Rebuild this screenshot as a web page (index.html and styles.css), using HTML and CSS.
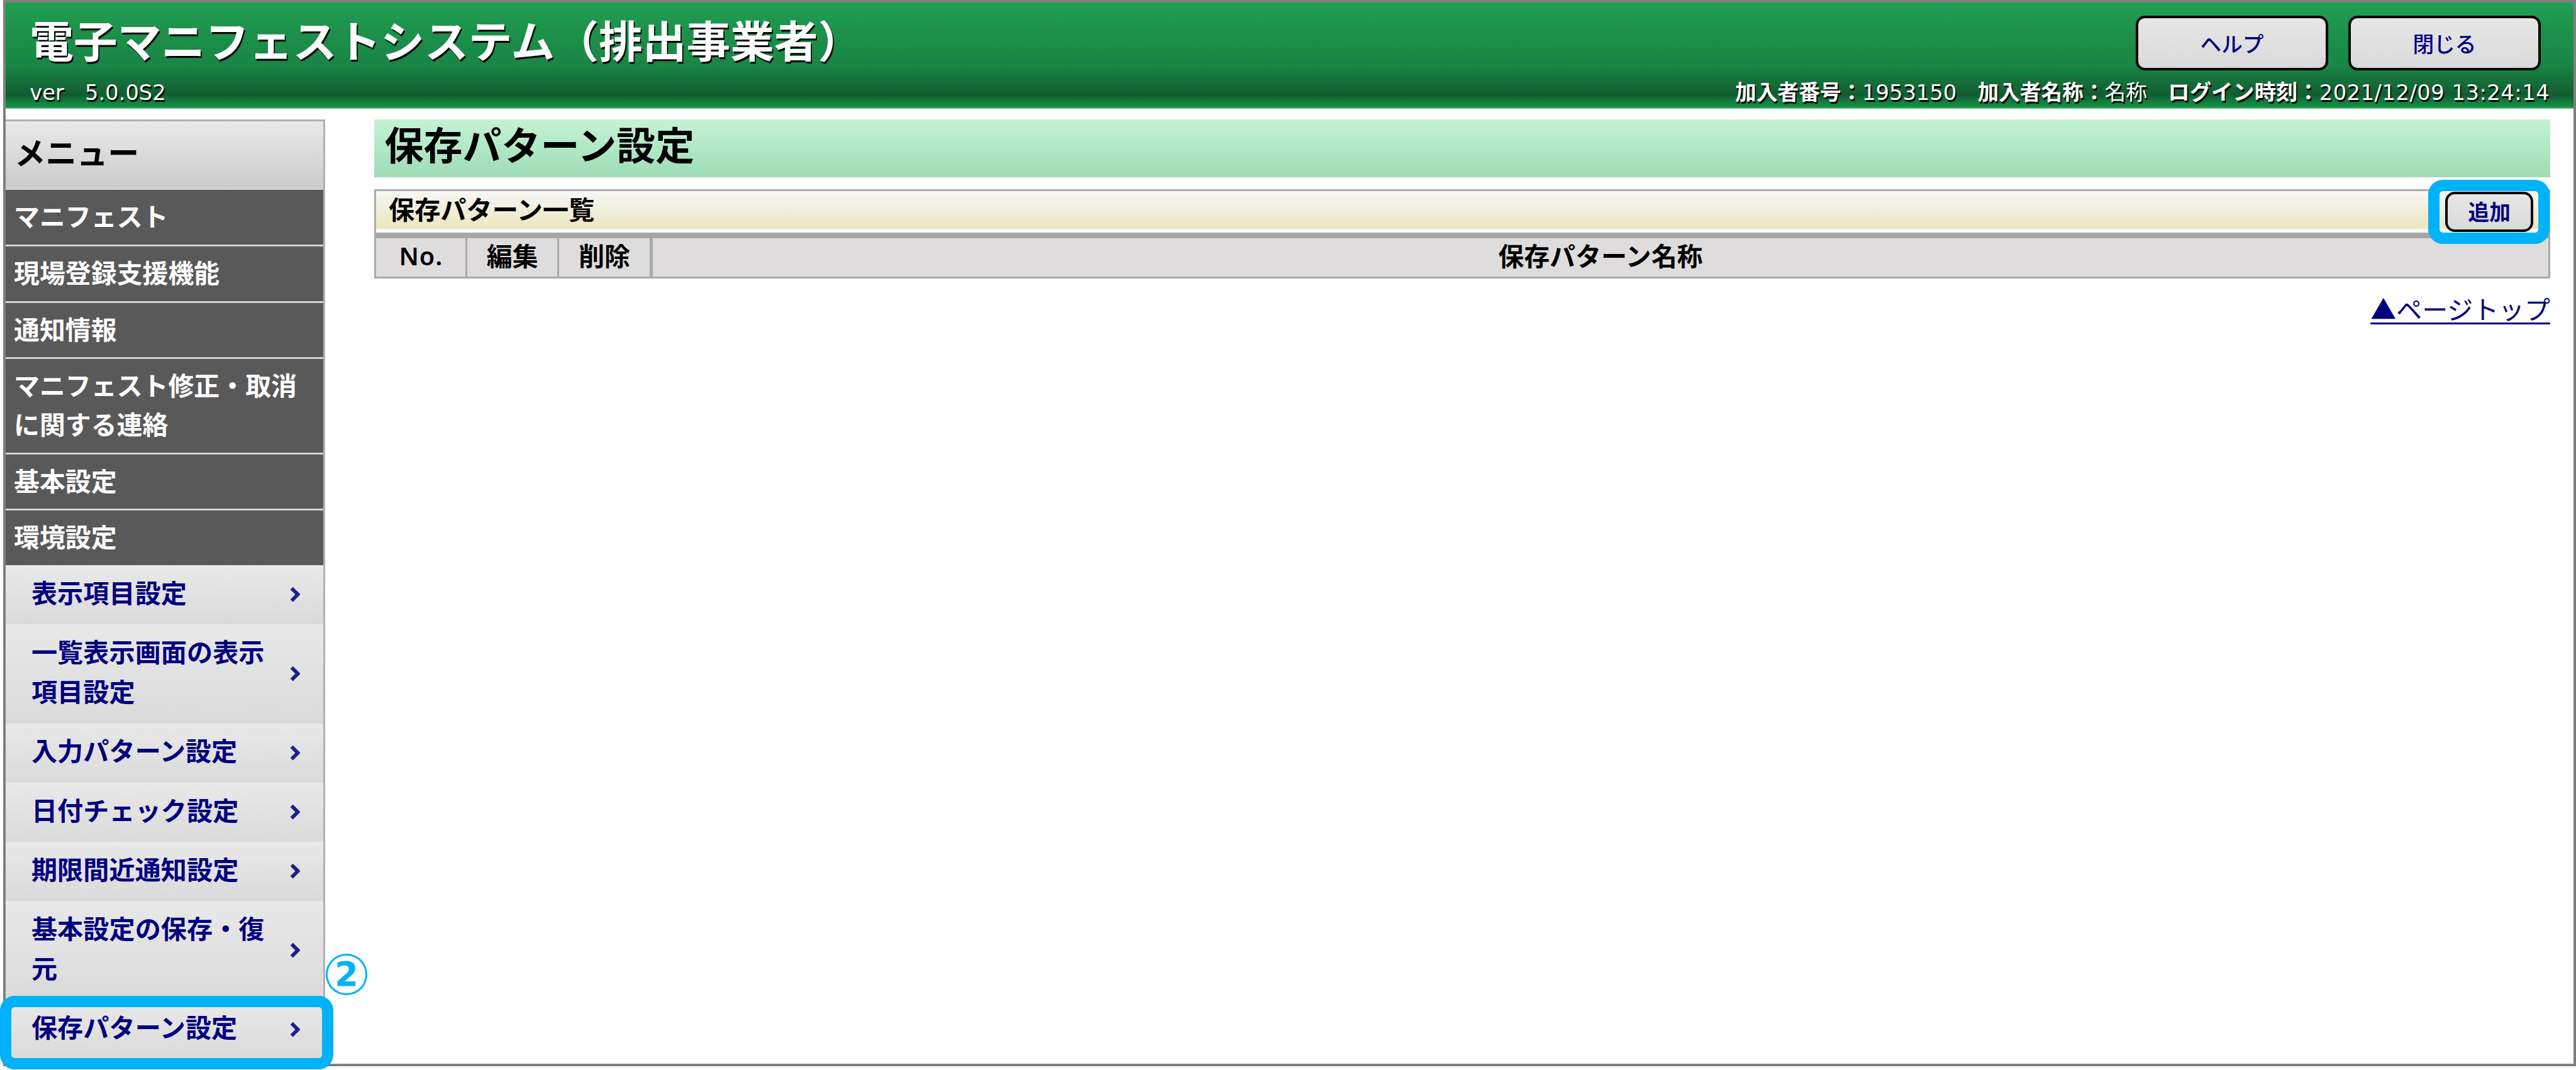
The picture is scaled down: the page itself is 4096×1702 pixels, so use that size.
FILE: index.html
```html
<!DOCTYPE html>
<html lang="ja">
<head>
<meta charset="utf-8">
<title>電子マニフェストシステム</title>
<link rel="stylesheet" href="styles.css">
</head>
<body>
<svg class="defs" aria-hidden="true"><symbol id="chevron" viewBox="0 0 18 28"><path d="M3 3 L14 14 L3 25" fill="none" stroke="currentColor" stroke-width="6.5"/></symbol></svg>
<div class="frame">
  <header class="header">
    <div class="brand">
      <h1 class="brand-title">電子マニフェストシステム（排出事業者）</h1>
      <div class="version"><span>ver</span><span>5.0.0S2</span></div>
    </div>
    <div class="account">
      <div class="header-buttons">
        <button class="button">ヘルプ</button>
        <button class="button">閉じる</button>
      </div>
      <div class="login">
        <span><b>加入者番号：</b><span class="latin">1953150</span></span>
        <span><b>加入者名称：</b>名称</span>
        <span><b class="time-label">ログイン時刻：</b><span class="latin date">2021/12/09 13:24:14</span></span>
      </div>
    </div>
  </header>
  <div class="body">
    <nav class="menu">
      <h2 class="menu-title">メニュー</h2>
      <a class="menu-item">マニフェスト</a>
      <a class="menu-item">現場登録支援機能</a>
      <a class="menu-item">通知情報</a>
      <a class="menu-item">マニフェスト修正・取消に関する連絡</a>
      <a class="menu-item">基本設定</a>
      <a class="menu-item">環境設定</a>
      <a class="sub-item"><span class="sub-label">表示項目設定</span><svg class="chevron"><use href="#chevron"/></svg></a>
      <a class="sub-item"><span class="sub-label">一覧表示画面の表示項目設定</span><svg class="chevron"><use href="#chevron"/></svg></a>
      <a class="sub-item"><span class="sub-label">入力パターン設定</span><svg class="chevron"><use href="#chevron"/></svg></a>
      <a class="sub-item"><span class="sub-label">日付チェック設定</span><svg class="chevron"><use href="#chevron"/></svg></a>
      <a class="sub-item"><span class="sub-label">期限間近通知設定</span><svg class="chevron"><use href="#chevron"/></svg></a>
      <a class="sub-item"><span class="sub-label">基本設定の保存・復元</span><svg class="chevron"><use href="#chevron"/></svg></a>
      <a class="sub-item"><span class="sub-label">保存パターン設定</span><svg class="chevron"><use href="#chevron"/></svg><span class="mark mark-menu"></span><span class="step">2</span></a>
    </nav>
    <main class="main">
      <h2 class="page-title">保存パターン設定</h2>
      <section class="list">
        <div class="list-head">
          <h3 class="list-title">保存パターン一覧</h3>
          <div class="add"><button class="button button-small">追加</button><span class="mark mark-add"></span></div>
        </div>
        <div class="columns">
          <div class="column latin-bold">No.</div>
          <div class="column">編集</div>
          <div class="column">削除</div>
          <div class="column">保存パターン名称</div>
        </div>
      </section>
      <a class="page-top">▲ページトップ</a>
    </main>
  </div>
</div>
</body>
</html>
```
FILE: styles.css
```css
html { font-size: 9.012px; }
* { box-sizing: border-box; }
body {
  margin: 0;
  width: 454.5rem;
  height: 188.8rem;
  overflow: hidden;
  background: #fff;
  color: #000;
  font-family: "Noto Sans CJK JP", sans-serif;
  font-size: 4.54rem;
}
h1, h2, h3 { margin: 0; }
.defs { display: none; }
.frame {
  margin-left: .6rem;
  width: 453.9rem;
  height: 188.2rem;
  border: .45rem solid #7f7f7f;
}

/* header */
.header {
  display: flex;
  justify-content: space-between;
  height: 18.8rem;
  padding: 0 4.2rem 0 4.2rem;
  color: #fff;
  text-shadow: .2rem .3rem .1rem #000;
  background: linear-gradient(#1fa053 0%, #1d924b 25%, #198545 60%, #156f3a 74%, #125c2f 87%, #138441 95%, #139245 98.5%, #8fd0a6 100%);
}
.brand-title { font-size: 7.74rem; line-height: 12.8rem; font-weight: 700; white-space: nowrap; }
.version {
  display: flex;
  gap: 3.7rem;
  margin-top: .6rem;
  font: 3.74rem/5rem "DejaVu Sans", sans-serif;
}
.account { padding-top: 2.35rem; }
.header-buttons { display: flex; justify-content: flex-end; gap: 3.6rem; padding-right: 1.6rem; }
.button {
  width: 33.9rem;
  height: 9.65rem;
  padding: 0;
  border: .45rem solid #000;
  border-radius: 1.6rem;
  background: linear-gradient(#e6e6e6, #dadada);
  color: #000080;
  font: 500 3.74rem/5rem "Noto Sans CJK JP", sans-serif;
}
.login {
  display: flex;
  justify-content: flex-end;
  gap: 3.7rem;
  margin-top: 1.07rem;
  font-size: 3.74rem;
  line-height: 5rem;
  white-space: nowrap;
}
.latin { font-family: "DejaVu Sans", sans-serif; }
.time-label { font-size: 3.81rem; }
.date { letter-spacing: .06rem; }

/* side menu */
.body { display: flex; padding-top: 1.8rem; }
.menu {
  width: 56.3rem;
  height: 166rem;
  border-right: .34rem solid #b0b0b0;
  font-weight: 700;
}
.menu-title {
  height: 12.5rem;
  padding-left: 1.5rem;
  border-top: .34rem solid #b0b0b0;
  border-bottom: .34rem solid #d2d2d2;
  background: linear-gradient(#e9e9e9, #cbcbcb);
  font-size: 5.5rem;
  line-height: 10.6rem;
}
.menu-item {
  display: block;
  padding: 1.1rem 2.6rem 1.68rem 1.4rem;
  border-bottom: .34rem solid #d2d2d2;
  background: #595959;
  color: #fff;
  line-height: 6.84rem;
}
.menu-item:nth-of-type(6) { border-bottom: 0; }
.sub-item {
  position: relative;
  display: flex;
  align-items: center;
  justify-content: space-between;
  padding: 1.2rem 4.1rem 2.26rem 4.5rem;
  background: linear-gradient(#e9e9e9, #dadada);
  color: #000080;
  font-size: 4.57rem;
  line-height: 7rem;
}
.sub-label { width: 43rem; }
.chevron { width: 1.8rem; height: 2.8rem; margin-top: 1rem; color: #20208c; }

/* markers drawn over the screen */
.mark { position: absolute; border: 2.1rem solid #00b2f8; border-radius: 2.6rem; }
.mark-menu { left: -1rem; top: -.7rem; width: 58.8rem; height: 13rem; }
.mark-add { right: -2.8rem; top: -2.1rem; width: 21.4rem; height: 11.3rem; }
.step {
  position: absolute;
  left: 56.4rem;
  top: -8.2rem;
  width: 7.4rem;
  height: 7.3rem;
  border: .34rem solid #00b2f8;
  border-radius: 50%;
  color: #00b2f8;
  font: 700 6rem/6.7rem "DejaVu Sans", sans-serif;
  text-align: center;
}

/* main area */
.main { display: flex; flex-direction: column; width: 383.9rem; margin-left: 8.7rem; }
.page-title {
  height: 10.3rem;
  padding-left: 1.8rem;
  background: linear-gradient(#c4f3d4, #9edcb5);
  font-size: 6.88rem;
  line-height: 8.6rem;
}
.list { margin-top: 2.1rem; border: .34rem solid #aaa; }
.list-head {
  display: flex;
  justify-content: space-between;
  height: 7.3rem;
  padding: 0 2.6rem 0 2.2rem;
  border-bottom: .7rem solid #fafcfb;
  background: linear-gradient(#f8f8f6, #f0eedb 50%, #ede6bd);
}
.list-title { font-size: 4.57rem; line-height: 6.1rem; font-weight: 700; }
.add { position: relative; height: 7.1rem; margin-top: .1rem; }
.button-small { display: block; width: 15.6rem; height: 7.1rem; padding: 0 0 .4rem; border-radius: 1.7rem; font-weight: 700; }
.columns {
  display: grid;
  grid-template-columns: 16.1rem 16.2rem 16.5rem 1fr;
  border-top: 1rem solid #a6a6a6;
  background: #dedcdd;
}
.column {
  height: 6.8rem;
  border-right: .34rem solid #aaa;
  font-weight: 700;
  line-height: 5.9rem;
  text-align: center;
}
.column:nth-child(3) { border-right-width: .6rem; }
.column:last-child { border-right: 0; }
.latin-bold { font: 600 4.4rem/6.3rem "Noto Sans", sans-serif; letter-spacing: .1rem; }
.page-top {
  align-self: flex-end;
  margin-top: 2.2rem;
  color: #000080;
  line-height: 6.2rem;
  text-decoration: underline;
  text-decoration-thickness: .35rem;
  text-underline-offset: .5rem;
  text-decoration-skip-ink: none;
}
```
